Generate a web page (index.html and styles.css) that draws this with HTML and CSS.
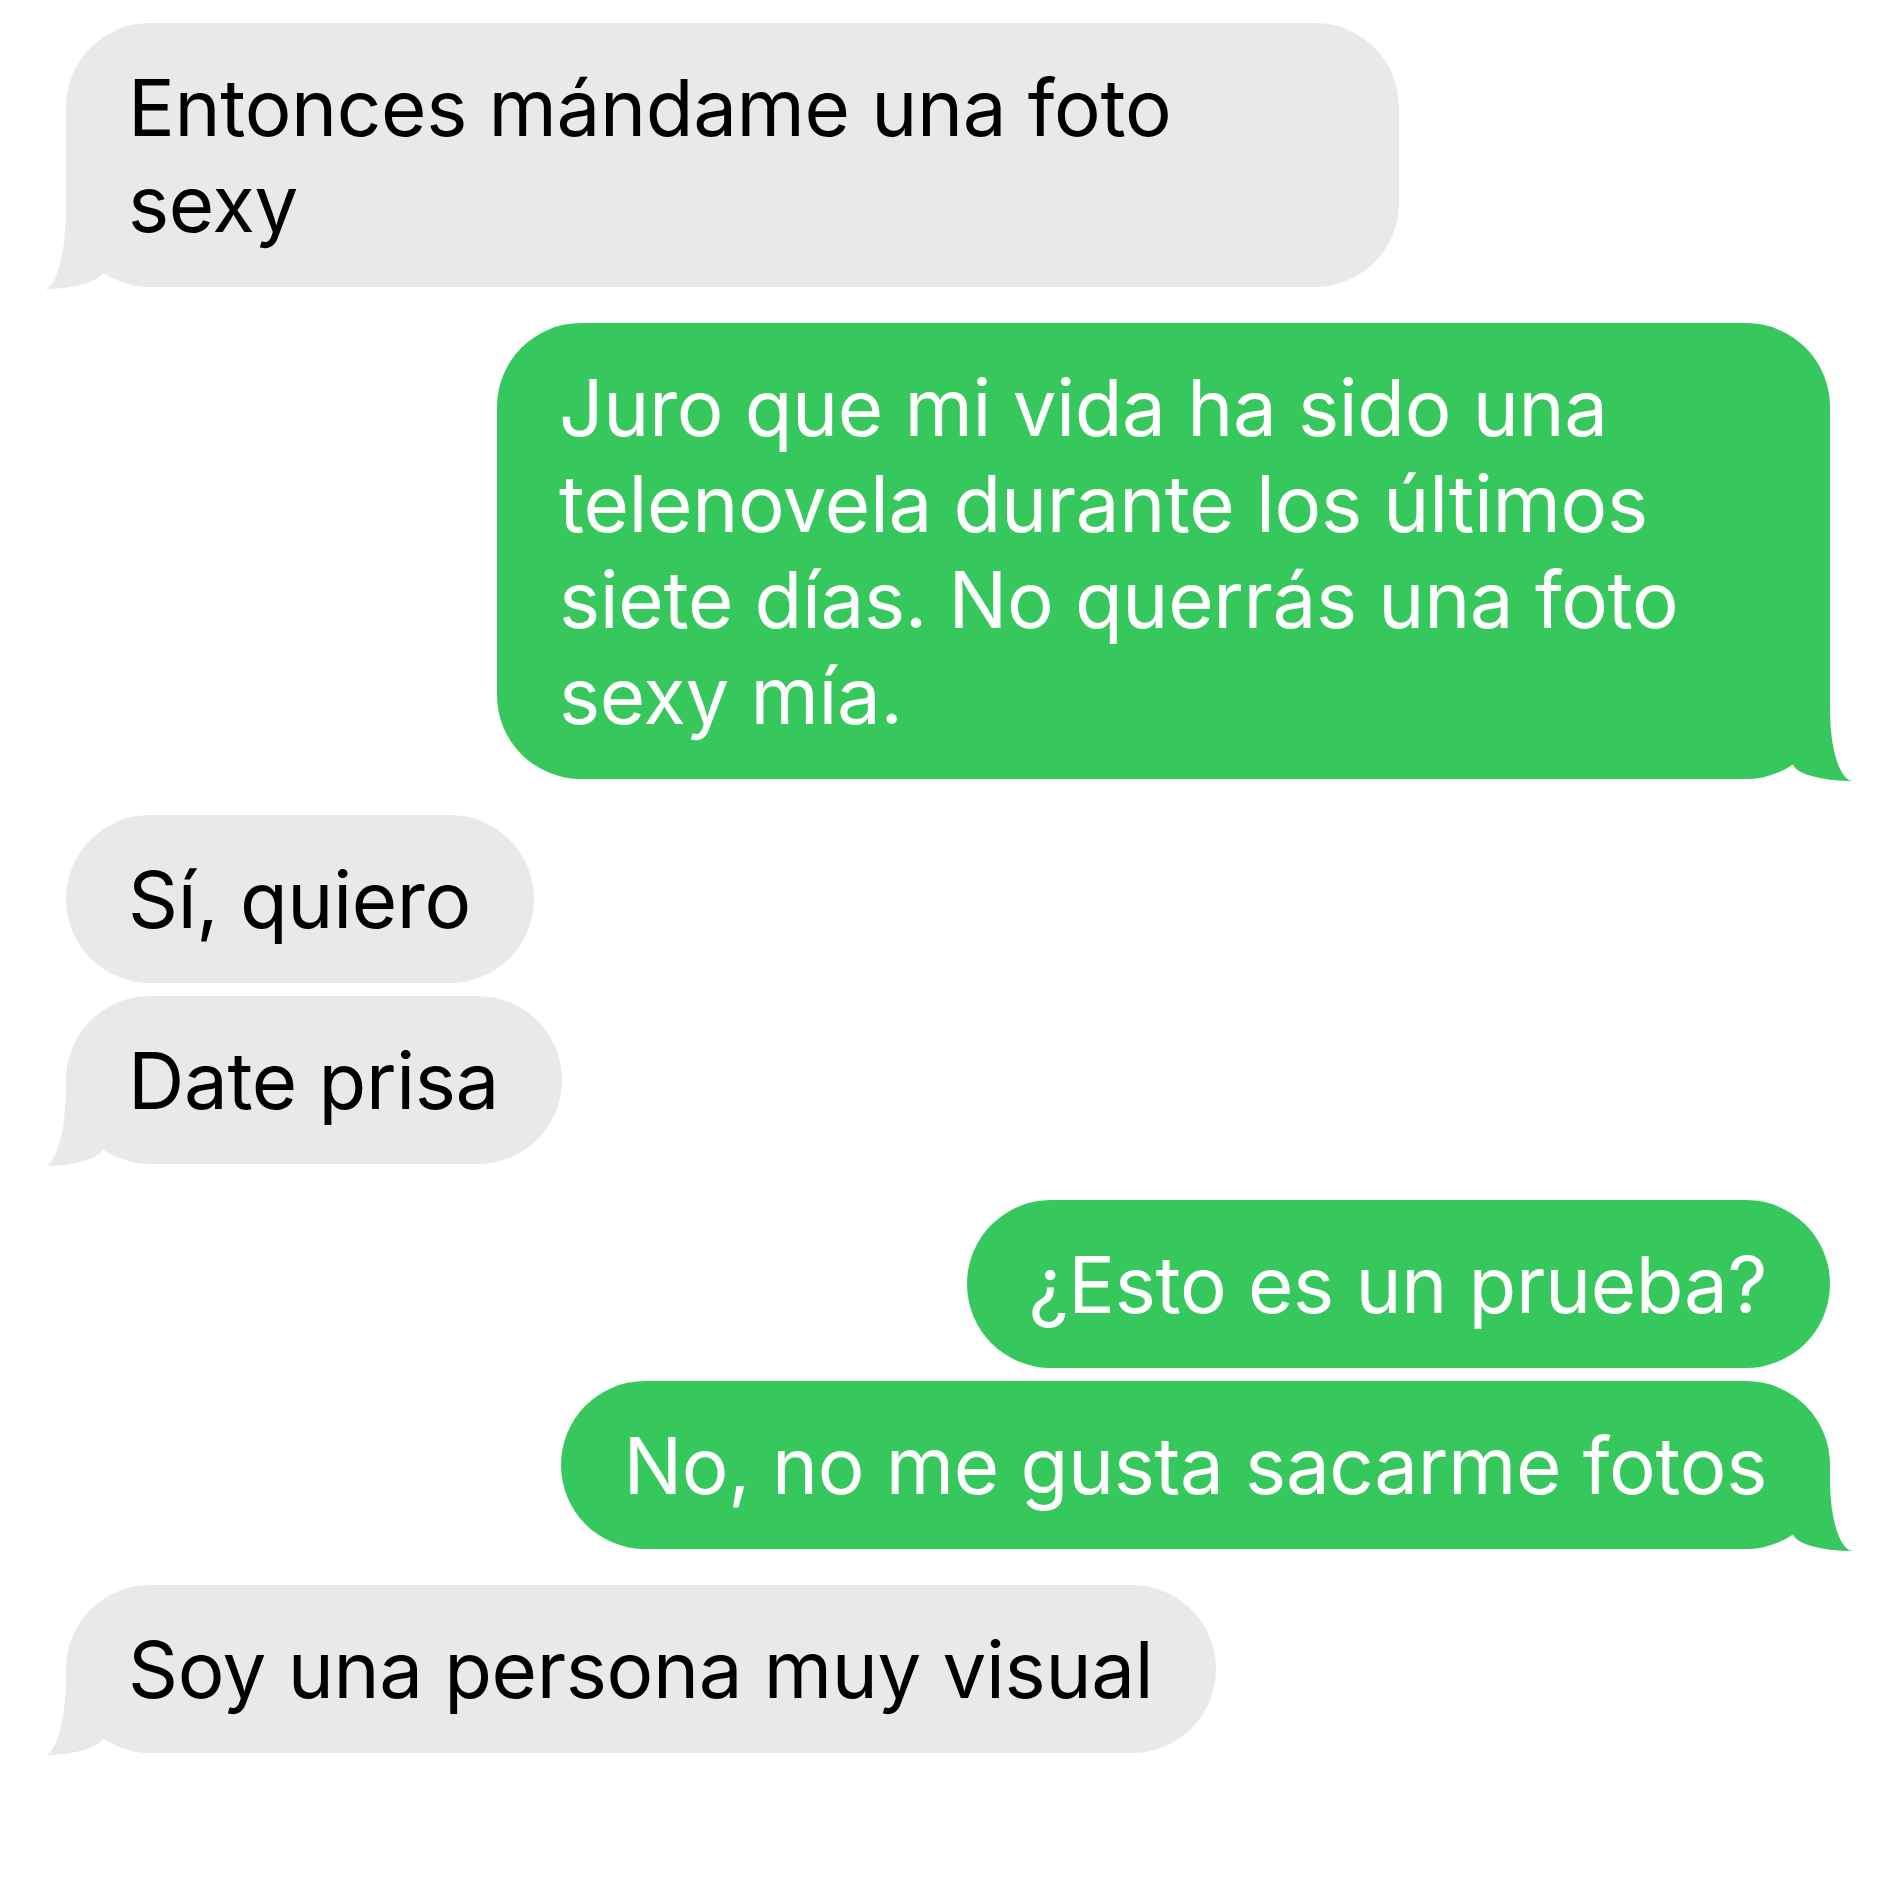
FILE: index.html
```html
<!DOCTYPE html>
<html lang="es">
<head>
    <meta charset="UTF-8">
    <meta name="viewport" content="width=device-width, initial-scale=1.0">
    <title>Mensajes</title>
    <link rel="stylesheet" href="styles.css">
</head>
<body>
    <div id="chat">
        <div class="group">
            <div class="msg them tail">Entonces mándame una foto sexy</div>
        </div>
        <div class="group">
            <div class="msg me tail">Juro que mi vida ha sido una telenovela durante los últimos siete días. No querrás una foto sexy mía.</div>
        </div>
        <div class="group">
            <div class="msg them">Sí, quiero</div>
            <div class="msg them tail">Date prisa</div>
        </div>
        <div class="group">
            <div class="msg me">¿Esto es un prueba?</div>
            <div class="msg me tail">No, no me gusta sacarme fotos</div>
        </div>
        <div class="group">
            <div class="msg them tail">Soy una persona muy visual</div>
        </div>
    </div>
</body>
</html>
```

FILE: styles.css
```css
body {
    margin: 0;
    padding: 0;
    background-color: #ffffff;
    font-family: Inter, "Noto Sans", sans-serif;
}
#chat {
    display: flex;
    flex-direction: column;
    gap: 36px;
    padding: 23px 66px;
}
.group {
    display: flex;
    flex-direction: column;
    gap: 13px;
}
.msg {
    position: relative;
    max-width: 1333px;
    width: fit-content;
    box-sizing: border-box;
    padding: 37px 63px 35px 62px;
    border-radius: 84px;
    font-size: 78px;
    line-height: 96px;
    letter-spacing: -0.35px;
}
.them {
    align-self: flex-start;
    background-color: #e9e9eb;
    color: #000000;
}
.me {
    align-self: flex-end;
    background-color: #36c85c;
    color: #ffffff;
}

/* bubble tails */
.tail::before,
.tail::after {
    content: "";
    position: absolute;
    bottom: -2px;
}
.them.tail::before {
    left: -22px;
    width: 60px;
    height: 90px;
    background-color: #e9e9eb;
    border-bottom-right-radius: 60px 20px;
}
.them.tail::after {
    right: 100%;
    width: 40px;
    height: 92px;
    background-color: #ffffff;
    border-bottom-right-radius: 22px 80px;
}
.me.tail::before {
    right: -23px;
    width: 60px;
    height: 90px;
    background-color: #36c85c;
    border-bottom-left-radius: 60px 18px;
}
.me.tail::after {
    left: 100%;
    width: 40px;
    height: 92px;
    background-color: #ffffff;
    border-bottom-left-radius: 23px 70px;
}
```
